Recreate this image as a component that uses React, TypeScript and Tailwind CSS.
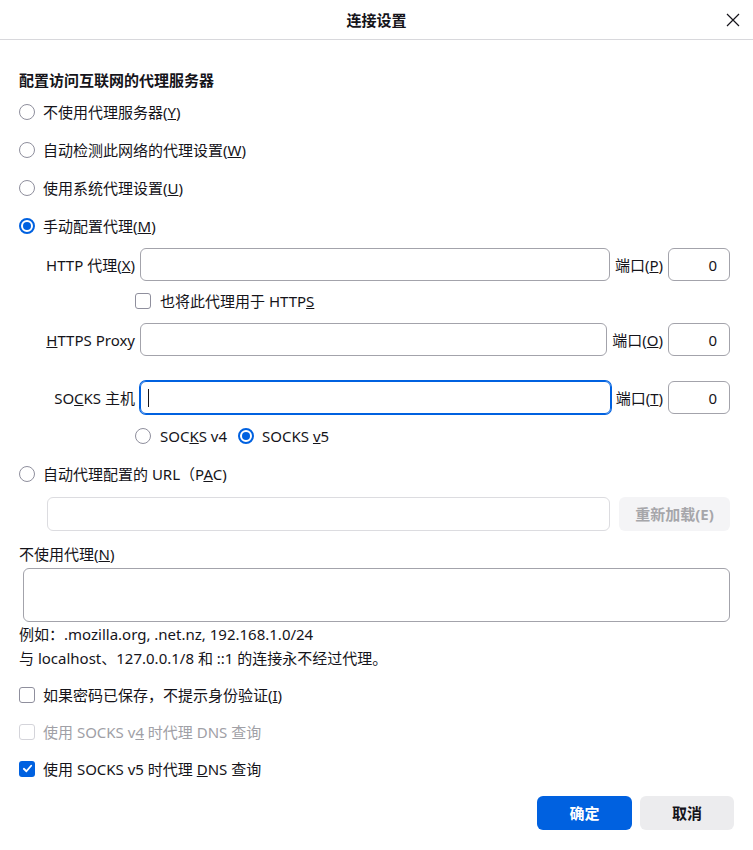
import React from "react";

const FONT = { fontFamily: '"Noto Sans", "Noto Sans CJK SC", sans-serif' };

function Radio({ checked }: { checked?: boolean }) {
  return checked ? (
    <span className="w-4 h-4 rounded-full border-2 border-[#0061e0] flex items-center justify-center shrink-0 box-border">
      <span className="w-[8px] h-[8px] rounded-full bg-[#0061e0]" />
    </span>
  ) : (
    <span className="w-4 h-4 rounded-full border border-[#8f8f9d] shrink-0 box-border" />
  );
}

function Check({ checked, disabled }: { checked?: boolean; disabled?: boolean }) {
  if (checked)
    return (
      <span className="w-4 h-4 rounded-[3px] bg-[#0061e0] flex items-center justify-center shrink-0">
        <svg width="11" height="11" viewBox="0 0 12 12" fill="none">
          <path d="M2 6.3 L4.8 9 L10 3" stroke="white" strokeWidth="2" strokeLinecap="round" strokeLinejoin="round" />
        </svg>
      </span>
    );
  return (
    <span
      className={
        disabled
          ? "w-4 h-4 rounded-[3px] border border-[#d4d4da] shrink-0 box-border"
          : "w-4 h-4 rounded-[3px] border border-[#8f8f9d] shrink-0 box-border"
      }
    />
  );
}

function Field({ focused, children }: { focused?: boolean; children?: React.ReactNode }) {
  return (
    <div
      className={
        focused
          ? "flex-1 h-full rounded-[6px] border border-[#0061e0] ring-1 ring-[#0061e0] flex items-center"
          : "flex-1 h-full rounded-[6px] border border-[#a3a3ab] flex items-center"
      }
    >
      {children}
    </div>
  );
}

function Port() {
  return (
    <div className="w-[62px] h-full rounded-[6px] border border-[#a3a3ab] flex items-center justify-end pr-[12px] shrink-0">
      0
    </div>
  );
}

export default function App() {
  return (
    <div className="w-[753px] h-[850px] bg-white text-[#15141a] text-[15px] flex flex-col" style={FONT}>
      <header className="h-[40px] border-b border-[#d8d8dc] grid grid-cols-[1fr_auto_1fr] items-center shrink-0">
        <span />
        <span className="font-bold leading-[20px]">连接设置</span>
        <span className="flex justify-end pr-[13px]">
          <svg width="14" height="14" viewBox="0 0 14 14" fill="none">
            <path d="M1 1 L13 13 M13 1 L1 13" stroke="#15141a" strokeWidth="1.2" />
          </svg>
        </span>
      </header>

      <div className="flex flex-col pl-[19px] pr-[23px] leading-[20px]">
        <div className="mt-[30px] font-bold">配置访问互联网的代理服务器</div>

        <div className="mt-[3px] h-[38px] flex items-center gap-[8px]">
          <Radio />
          <span>不使用代理服务器(<u>Y</u>)</span>
        </div>
        <div className="h-[38px] flex items-center gap-[8px]">
          <Radio />
          <span>自动检测此网络的代理设置(<u>W</u>)</span>
        </div>
        <div className="h-[38px] flex items-center gap-[8px]">
          <Radio />
          <span>使用系统代理设置(<u>U</u>)</span>
        </div>
        <div className="h-[38px] flex items-center gap-[8px]">
          <Radio checked />
          <span>手动配置代理(<u>M</u>)</span>
        </div>

        <div className="mt-[3px] h-[33px] flex items-center gap-[5px]">
          <span className="w-[116px] text-right shrink-0">HTTP 代理(<u>X</u>)</span>
          <Field />
          <span className="shrink-0">端口(<u>P</u>)</span>
          <Port />
        </div>
        <div className="h-[40px] flex items-center gap-[9px] pl-[116px]">
          <Check />
          <span>也将此代理用于 HTTP<u>S</u></span>
        </div>
        <div className="mt-[2px] h-[33px] flex items-center gap-[5px]">
          <span className="w-[116px] text-right shrink-0"><u>H</u>TTPS Proxy</span>
          <Field />
          <span className="shrink-0">端口(<u>O</u>)</span>
          <Port />
        </div>

        <div className="mt-[25px] h-[33px] flex items-center gap-[5px]">
          <span className="w-[116px] text-right shrink-0">SO<u>C</u>KS 主机</span>
          <Field focused>
            <span className="ml-[7px] w-px h-[18px] bg-[#15141a]" />
          </Field>
          <span className="shrink-0">端口(<u>T</u>)</span>
          <Port />
        </div>
        <div className="h-[44px] flex items-center pl-[116px]">
          <Radio />
          <span className="ml-[9px]">SOC<u>K</u>S v4</span>
          <span className="ml-[11px]" />
          <Radio checked />
          <span className="ml-[8px]">SOCKS <u>v</u>5</span>
        </div>

        <div className="h-[32px] flex items-center gap-[8px]">
          <Radio />
          <span>自动代理配置的 URL（P<u>A</u>C)</span>
        </div>
        <div className="mt-[7px] h-[34px] flex items-center gap-[9px] pl-[28px]">
          <div className="flex-1 h-full rounded-[6px] border border-[#dcdce0]" />
          <div className="w-[111px] h-full rounded-[6px] bg-[#f4f4f6] text-[#a6a6aa] font-bold flex items-center justify-center shrink-0">
            重新加载(E)
          </div>
        </div>

        <div className="mt-[13px]">不使用代理(<u>N</u>)</div>
        <div className="mt-[4px] ml-[4px] h-[54px] rounded-[6px] border border-[#a3a3ab]" />
        <div className="leading-[24px]">例如：.mozilla.org, .net.nz, 192.168.1.0/24</div>
        <div className="leading-[24px]">与 localhost、127.0.0.1/8 和 ::1 的连接永不经过代理。</div>

        <div className="mt-[6px] h-[37px] flex items-center gap-[8px]">
          <Check />
          <span>如果密码已保存，不提示身份验证(<u>I</u>)</span>
        </div>
        <div className="h-[37px] flex items-center gap-[8px] text-[#a0a0a6]">
          <Check disabled />
          <span>使用 SOCKS v<u>4</u> 时代理 DNS 查询</span>
        </div>
        <div className="h-[37px] flex items-center gap-[8px]">
          <Check checked />
          <span>使用 SOCKS v5 时代理 <u>D</u>NS 查询</span>
        </div>

        <div className="mt-[9px] -mr-[4px] flex justify-end gap-[8px]">
          <div className="w-[95px] h-[34px] rounded-[6px] bg-[#0061e0] text-white font-bold flex items-center justify-center">
            确定
          </div>
          <div className="w-[94px] h-[34px] rounded-[6px] bg-[#ececee] text-[#15141a] font-bold flex items-center justify-center">
            取消
          </div>
        </div>
      </div>
    </div>
  );
}
